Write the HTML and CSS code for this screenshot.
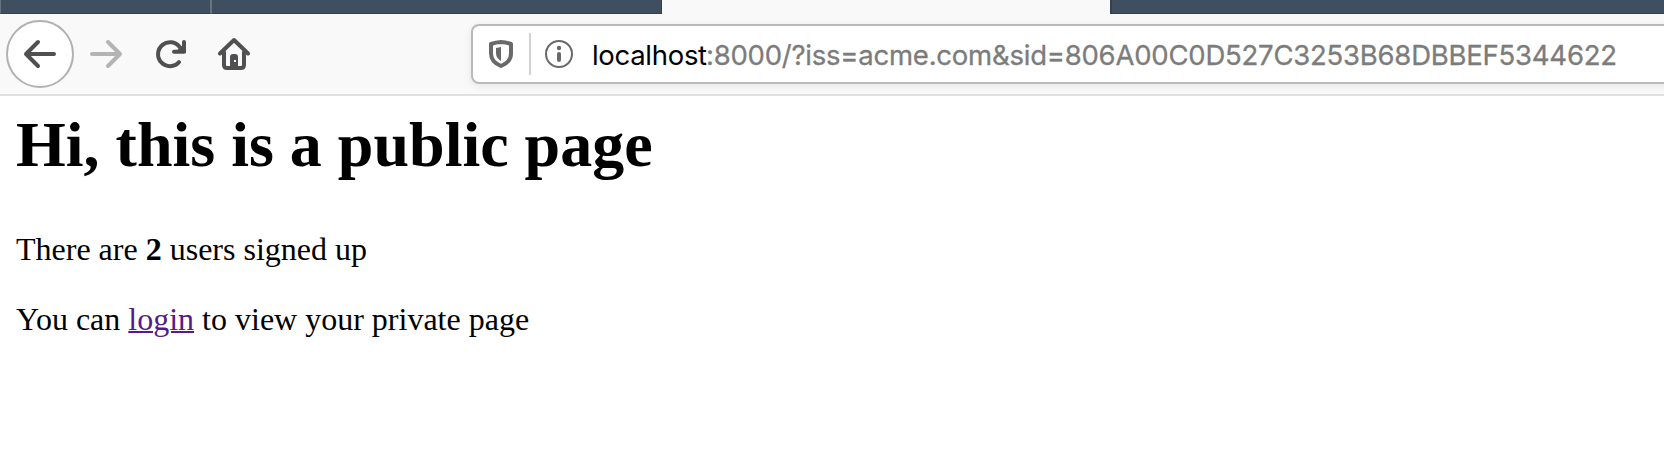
FILE: index.html
```html
<!DOCTYPE html>
<html lang="en">
<head>
<meta charset="utf-8">
<title>Public page</title>
<link rel="stylesheet" href="styles.css">
</head>
<body>
<div class="tabs"><div class="tab tab-first"></div><div class="tab tab-second"></div><div class="tab tab-active"></div><div class="tab tab-rest"></div></div>
<div class="toolbar">
  <svg class="nav" viewBox="0 0 260 80" fill="none" stroke="#505052" stroke-width="4" stroke-linecap="round" stroke-linejoin="round">
    <circle cx="40" cy="40" r="33" fill="#fff" stroke="#b1b1b1" stroke-width="2"/>
    <path d="M54 40H26M38 28L26 40l12 12"/>
    <path stroke="#b4b4b4" d="M92 40h28M108 28l12 12-12 12"/>
    <path d="M179 48.200A12 12 0 1 1 180 33.500"/>
    <path d="M184 28v9.700h-10"/>
    <path fill="#505052" stroke="none" d="M186 28v11h-12z"/>
    <path d="M220 39.500L234 26l14 13.500M224 38v13q0 3 3 3h14q3 0 3-3v-13"/>
    <path fill="#505052" stroke="none" d="M230 55V43q0-3 3-3h2q3 0 3 3v12z"/>
    <path fill="#f9f9fa" stroke="none" d="M234 46h2v2h-2z"/>
  </svg>
  <div class="address">
    <svg class="shield" viewBox="0 0 24 28">
      <path fill="none" stroke="#69696a" stroke-width="4" stroke-linejoin="round" d="M12 2Q17 2.200 22 4v9.500C22 20 17 24 12 26 7 24 2 20 2 13.500V4Q7 2.200 12 2z"/>
      <path fill="#69696a" d="M12 7v14c-3-2-5-4-5-8V8z"/>
    </svg>
    <div class="divider"></div>
    <svg class="info" viewBox="0 0 28 28">
      <circle cx="14" cy="14" r="13" fill="none" stroke="#69696a" stroke-width="2"/>
      <circle cx="14" cy="8" r="2.200" fill="#69696a"/>
      <path stroke="#69696a" stroke-width="4" stroke-linecap="round" d="M14 14v6"/>
    </svg>
    <div class="url"><span class="host">localhost</span><span class="path">:8000/?iss=acme.com&amp;sid=806A00C0D527C3253B68DBBEF5344622</span></div>
  </div>
</div>
<main class="page">
  <h1>Hi, this is a public page</h1>
  <p>There are <b>2</b> users signed up</p>
  <p>You can <a href="#">login</a> to view your private page</p>
</main>
</body>
</html>
```
FILE: styles.css
```css
* { box-sizing: border-box; }
body { margin: 0; height: 458px; overflow: hidden; background: #fff; }
.tabs { display: flex; height: 14px; background: #f9f9fa; }
.tab { background: #3f4f5f; border-bottom: 1px solid #334250; }
.tab-first { width: 212px; border-right: 2px solid #667480; border-left: 1px solid #667480; }
.tab-second { width: 450px; border-right: 1px solid #334250; }
.tab-active { width: 448px; background: #f9f9fa; border: 0; }
.tab-rest { flex: 1; border-left: 2px solid #334250; }
.toolbar { display: flex; height: 82px; background: #f9f9fa; border-bottom: 2px solid #e0e0e1; overflow: hidden; }
.nav { width: 260px; height: 80px; flex: none; }
.address { display: flex; align-items: center; flex: none; width: 1210px; height: 60px; margin: 10px 0 0 211px; padding-left: 16px; background: #fff; border: 2px solid #b9b9ba; border-radius: 8px; box-shadow: 0 2px 8px rgba(0,0,0,.08); }
.shield { width: 24px; height: 28px; flex: none; }
.divider { width: 2px; height: 42px; margin: 0 14px 0 16px; background: #d2d2d3; }
.info { width: 28px; height: 28px; flex: none; }
.url { margin-left: 19px; padding-top: 1px; font: 27.5px/36px Inter, "Liberation Sans", sans-serif; white-space: nowrap; color: #7c7c7c; -webkit-text-stroke: .3px currentColor; }
.host { display: inline-block; width: 114px; letter-spacing: -.3px; color: #000; -webkit-text-stroke: 0; }
.path { letter-spacing: -.23px; }
.page { padding: 12px 16px; font-family: "Liberation Serif", "Times New Roman", serif; color: #000; }
h1 { margin: 0; font-size: 64px; line-height: 74px; }
p { margin: 0; font-size: 32px; line-height: 38px; }
h1 + p { margin-top: 48px; }
p + p { margin-top: 32px; }
a { color: #551a8b; text-decoration-thickness: 2px; }
```
